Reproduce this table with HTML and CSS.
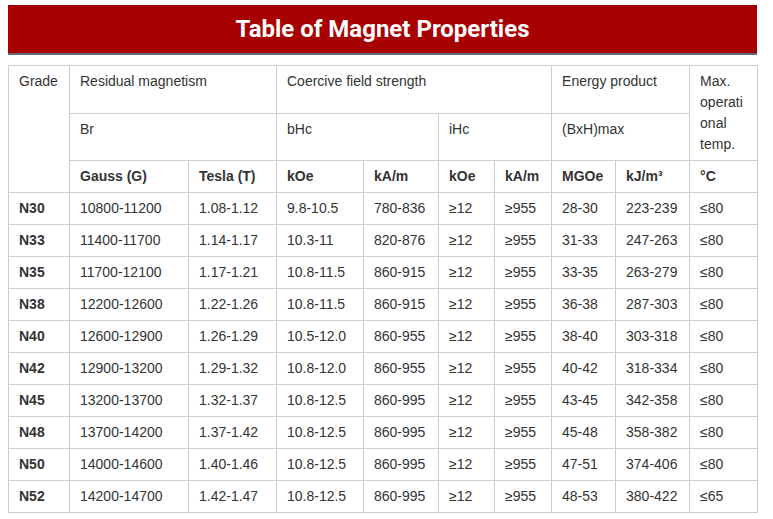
FILE: index.html
```html
<!DOCTYPE html>
<html>
<head>
<meta charset="utf-8">
<link rel="stylesheet" href="styles.css">
</head>
<body>
<div class="page">
  <h2 class="title">Table of Magnet Properties</h2>
  <table class="props">
    <colgroup>
      <col class="c1"><col class="c2"><col class="c3"><col class="c4"><col class="c5">
      <col class="c6"><col class="c7"><col class="c8"><col class="c9"><col class="c10">
    </colgroup>
    <tr class="h1">
      <td rowspan="3">Grade</td>
      <td colspan="2">Residual magnetism</td>
      <td colspan="4">Coercive field strength</td>
      <td colspan="2">Energy product</td>
      <td rowspan="2">Max. operational temp.</td>
    </tr>
    <tr class="h2">
      <td colspan="2">Br</td>
      <td colspan="2">bHc</td>
      <td colspan="2">iHc</td>
      <td colspan="2">(BxH)max</td>
    </tr>
    <tr class="units">
      <td>Gauss (G)</td><td>Tesla (T)</td><td>kOe</td><td>kA/m</td><td>kOe</td><td>kA/m</td><td>MGOe</td><td>kJ/m³</td><td>°C</td>
    </tr>
    <tr><td class="g">N30</td><td>10800-11200</td><td>1.08-1.12</td><td>9.8-10.5</td><td>780-836</td><td>≥12</td><td>≥955</td><td>28-30</td><td>223-239</td><td>≤80</td></tr>
    <tr><td class="g">N33</td><td>11400-11700</td><td>1.14-1.17</td><td>10.3-11</td><td>820-876</td><td>≥12</td><td>≥955</td><td>31-33</td><td>247-263</td><td>≤80</td></tr>
    <tr><td class="g">N35</td><td>11700-12100</td><td>1.17-1.21</td><td>10.8-11.5</td><td>860-915</td><td>≥12</td><td>≥955</td><td>33-35</td><td>263-279</td><td>≤80</td></tr>
    <tr><td class="g">N38</td><td>12200-12600</td><td>1.22-1.26</td><td>10.8-11.5</td><td>860-915</td><td>≥12</td><td>≥955</td><td>36-38</td><td>287-303</td><td>≤80</td></tr>
    <tr><td class="g">N40</td><td>12600-12900</td><td>1.26-1.29</td><td>10.5-12.0</td><td>860-955</td><td>≥12</td><td>≥955</td><td>38-40</td><td>303-318</td><td>≤80</td></tr>
    <tr><td class="g">N42</td><td>12900-13200</td><td>1.29-1.32</td><td>10.8-12.0</td><td>860-955</td><td>≥12</td><td>≥955</td><td>40-42</td><td>318-334</td><td>≤80</td></tr>
    <tr><td class="g">N45</td><td>13200-13700</td><td>1.32-1.37</td><td>10.8-12.5</td><td>860-995</td><td>≥12</td><td>≥955</td><td>43-45</td><td>342-358</td><td>≤80</td></tr>
    <tr><td class="g">N48</td><td>13700-14200</td><td>1.37-1.42</td><td>10.8-12.5</td><td>860-995</td><td>≥12</td><td>≥955</td><td>45-48</td><td>358-382</td><td>≤80</td></tr>
    <tr><td class="g">N50</td><td>14000-14600</td><td>1.40-1.46</td><td>10.8-12.5</td><td>860-995</td><td>≥12</td><td>≥955</td><td>47-51</td><td>374-406</td><td>≤80</td></tr>
    <tr><td class="g">N52</td><td>14200-14700</td><td>1.42-1.47</td><td>10.8-12.5</td><td>860-995</td><td>≥12</td><td>≥955</td><td>48-53</td><td>380-422</td><td>≤65</td></tr>
  </table>
</div>
</body>
</html>
```
FILE: styles.css
```css
html, body {
  margin: 0;
  padding: 0;
  background: #ffffff;
}
.page {
  padding: 5px 16px 0 8px;
  width: 749px;
}
.title {
  margin: 0;
  height: 47px;
  padding-top: 1px;
  background: #a70000;
  border-bottom: 2px solid #5b6a7d;
  color: #ffffff;
  font-family: Roboto, "Liberation Sans", sans-serif;
  font-weight: 700;
  font-size: 24px;
  line-height: 47px;
  text-align: center;
}
.props {
  margin-top: 10px;
  width: 749px;
  table-layout: fixed;
  border-collapse: collapse;
  font-family: "Liberation Sans", Arial, sans-serif;
  font-size: 14px;
  color: #333333;
}
.props td {
  border: 1px solid #cccccc;
  padding: 5px 10px;
  line-height: 21px;
  vertical-align: top;
  text-align: left;
  word-wrap: break-word;
  overflow-wrap: break-word;
}
.c1 { width: 61px; }
.c2 { width: 119px; }
.c3 { width: 88px; }
.c4 { width: 87px; }
.c5 { width: 75px; }
.c6 { width: 56px; }
.c7 { width: 57px; }
.c8 { width: 64px; }
.c9 { width: 74px; }
.c10 { width: 68px; }
.units td {
  font-weight: 700;
}
.props td.g {
  font-weight: 700;
}
```
